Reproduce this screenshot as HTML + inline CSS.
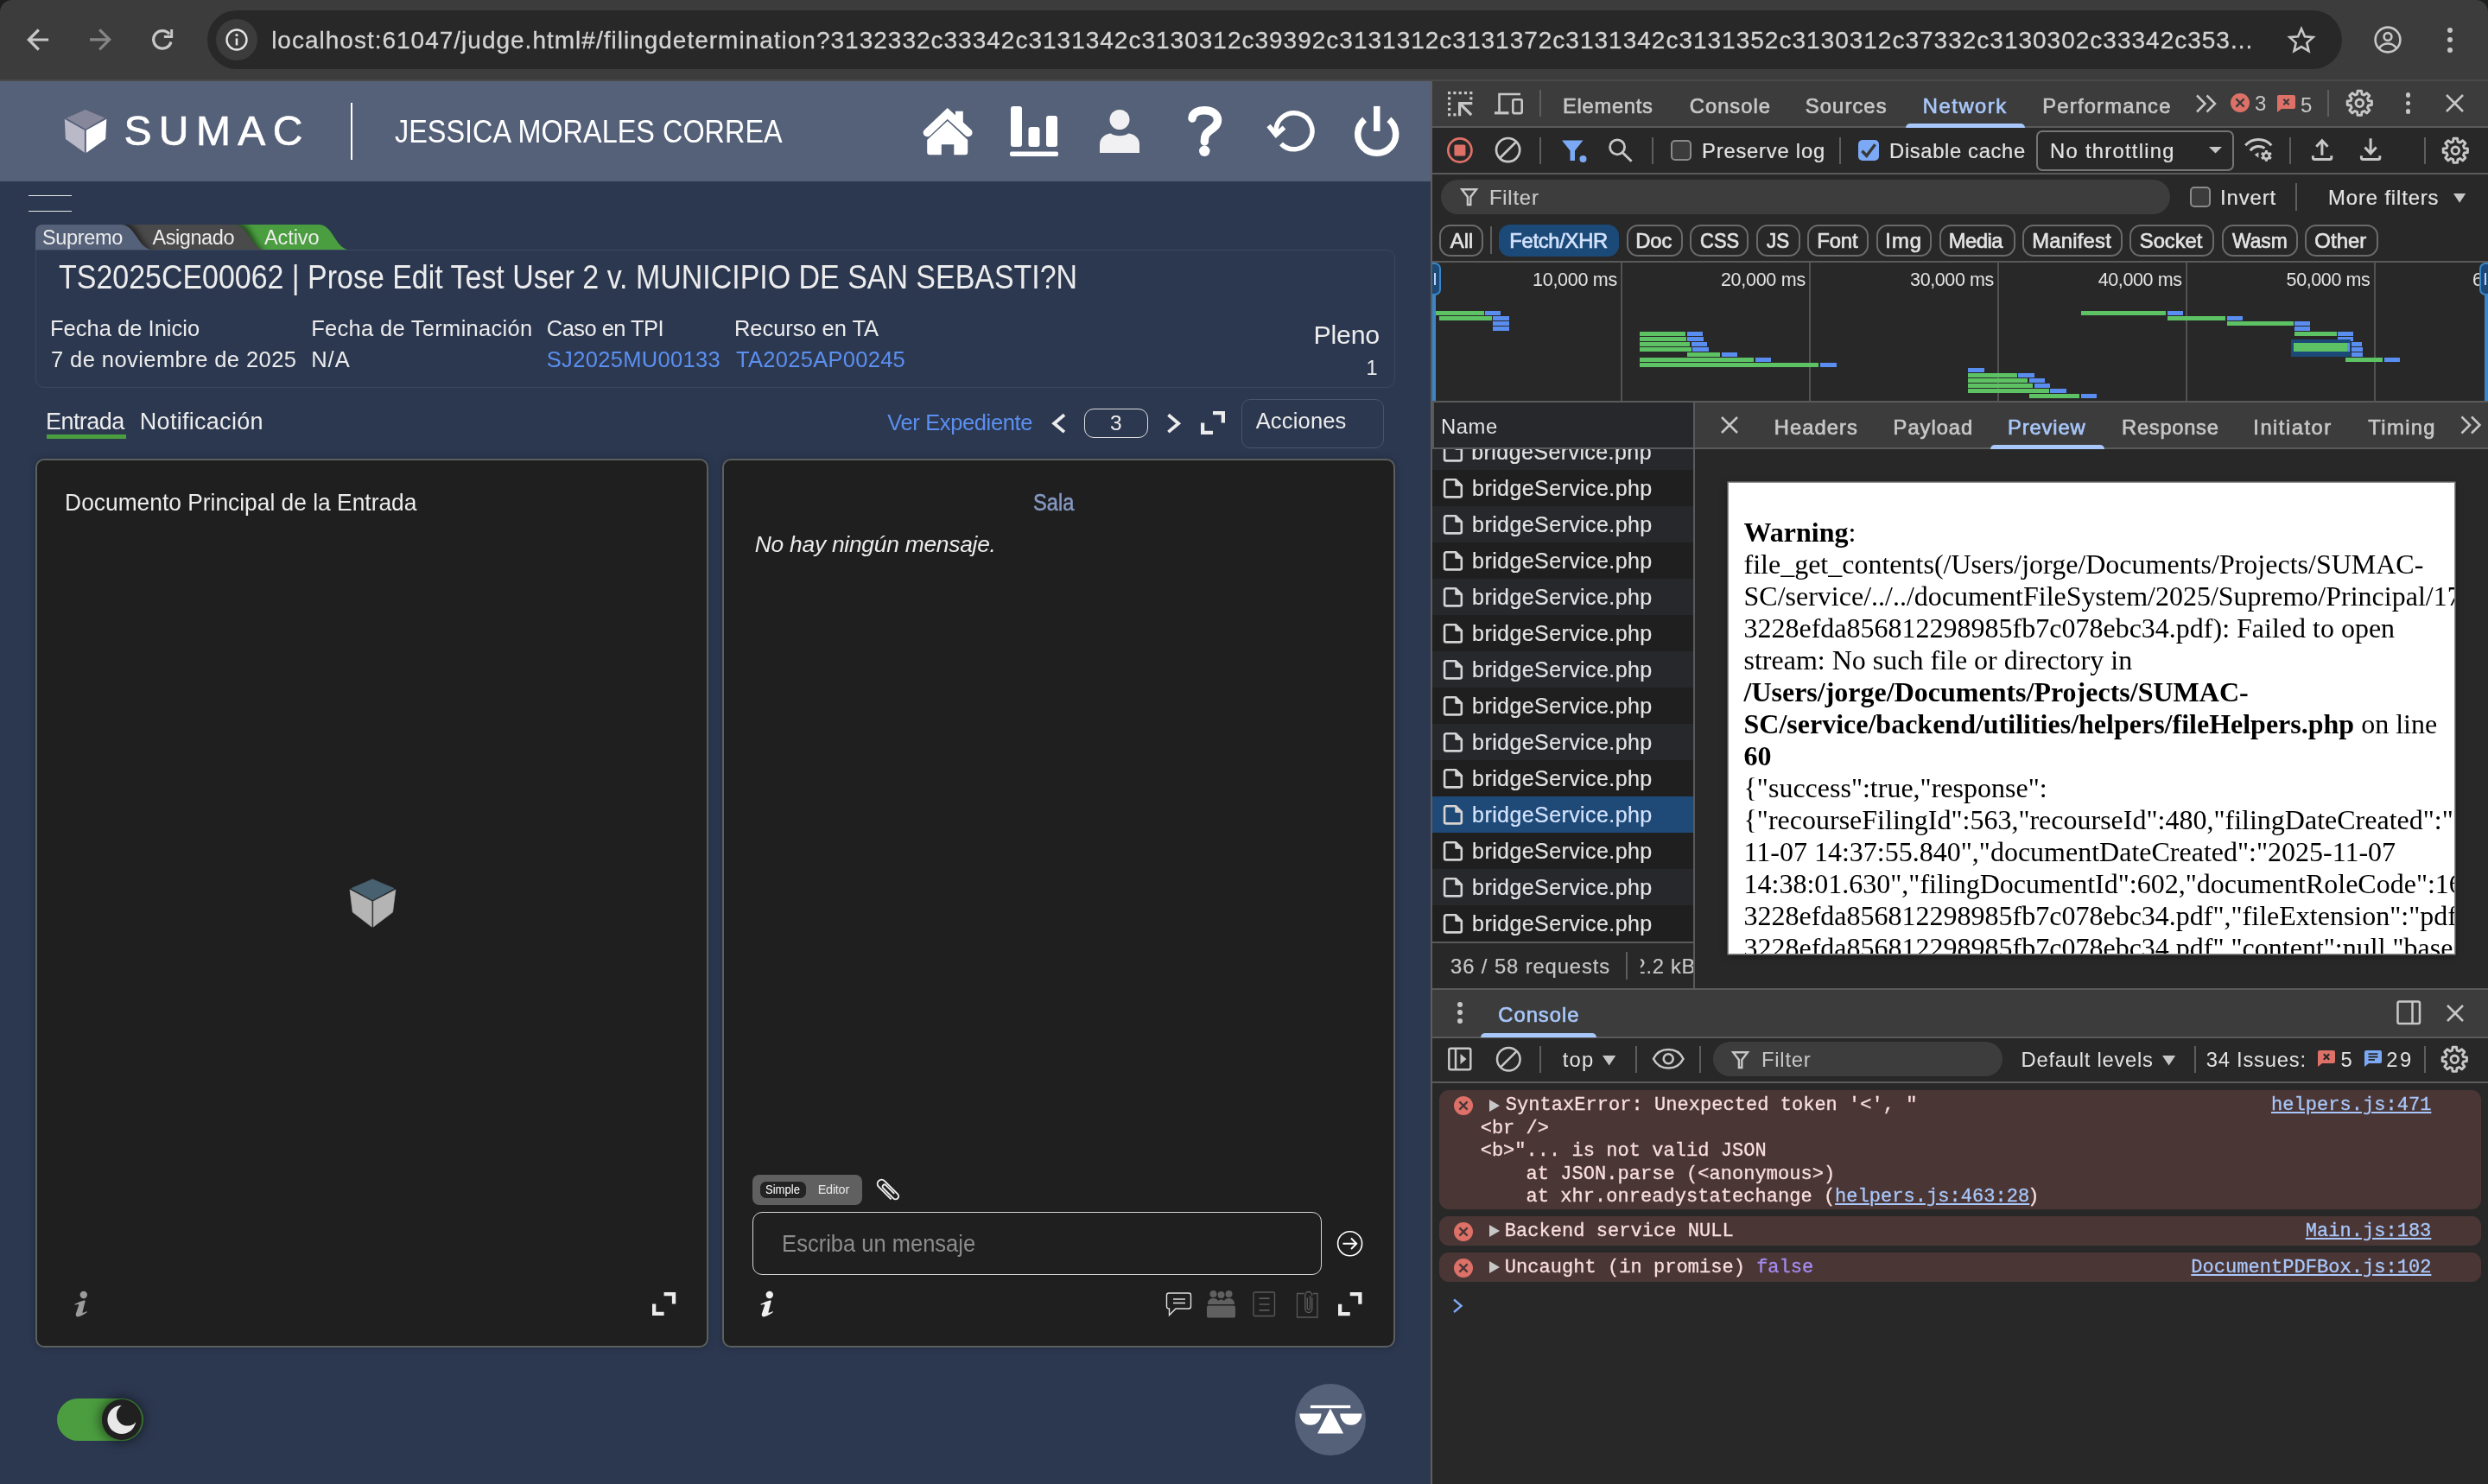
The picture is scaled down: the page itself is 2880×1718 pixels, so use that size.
<!DOCTYPE html>
<html><head><meta charset="utf-8"><title>page</title>
<style>
html,body{margin:0;padding:0;background:#282828;}
html{overflow:hidden;width:2880px;height:1718px;}
body{width:2880px;height:1718px;position:relative;overflow:hidden;will-change:transform;font-family:"Liberation Sans",sans-serif;}
.a{position:absolute;box-sizing:border-box;}
.t{position:absolute;white-space:pre;line-height:1;}
svg{position:absolute;overflow:visible;}
</style></head><body>
<div class="a" style="left:0px;top:0px;width:2880px;height:92px;background:#3c3c3c;"></div>
<div class="a" style="left:0px;top:92px;width:2880px;height:2px;background:#4a4a4a;"></div>
<svg style="left:0;top:0" width="24" height="24" viewBox="0 0 24 24"><path d="M0 0H14A14 14 0 0 0 0 14Z" fill="#1d1f1f"/></svg>
<svg style="left:2856px;top:0" width="24" height="24" viewBox="0 0 24 24"><path d="M24 0H10A14 14 0 0 1 24 14Z" fill="#1d1f1f"/></svg>
<div class="a" style="left:240px;top:12px;width:2471px;height:68px;background:#282828;border-radius:34px;"></div>
<div class="a" style="left:250px;top:22px;width:48px;height:48px;background:#3c3c3c;border-radius:24px;"></div>
<svg style="left:260px;top:32px" width="28" height="28" viewBox="0 0 28 28"><circle cx="14" cy="14" r="11.5" fill="none" stroke="#e3e3e3" stroke-width="2.4"/><rect x="12.7" y="12.4" width="2.6" height="8" fill="#e3e3e3"/><circle cx="14" cy="8.6" r="1.7" fill="#e3e3e3"/></svg>
<svg style="left:28px;top:30px" width="32" height="32" viewBox="28 30 32 32"><path d="M56.100 46H34M44.800 34.500L33.300 46L44.800 57.500" fill="none" stroke="#c7c7c7" stroke-width="3.200"/></svg>
<svg style="left:100px;top:30px" width="32" height="32" viewBox="100 30 32 32"><path d="M104 45.800H126.200M115.200 34.300L126.700 45.800L115.200 57.300" fill="none" stroke="#858585" stroke-width="3.200"/></svg>
<svg style="left:172px;top:30px" width="32" height="32" viewBox="172 30 32 32"><path d="M196.100 39.500A10.300 10.300 0 1 0 197.950 48.500" fill="none" stroke="#c7c7c7" stroke-width="3.200"/><path d="M198.700 34V42.500H189.900" fill="none" stroke="#c7c7c7" stroke-width="2.900"/></svg>
<div class="t" style='left:314.15px;top:32.70px;font-size:28px;color:#d4d4d4;letter-spacing:1.002px;-webkit-text-stroke:0.300px #d4d4d4;'>localhost:61047/judge.html#/filingdetermination?3132332c33342c3131342c3130312c39392c3131312c3131372c3131342c3131352c3130312c37332c3130302c33342c353...</div>
<svg style="left:2648px;top:30px" width="32" height="32" viewBox="0 0 32 32"><path d="M16 3.2l3.9 9 9.7.9-7.3 6.5 2.2 9.5L16 24.1l-8.5 5 2.2-9.5-7.3-6.5 9.7-.9z" fill="none" stroke="#c7c7c7" stroke-width="2.6" stroke-linejoin="miter"/></svg>
<svg style="left:2748px;top:30px" width="32" height="32" viewBox="0 0 32 32"><circle cx="16" cy="16" r="14.4" fill="none" stroke="#c7c7c7" stroke-width="2.6"/><circle cx="16" cy="12.5" r="4.4" fill="none" stroke="#c7c7c7" stroke-width="2.6"/><path d="M6.2 25.5c2.5-3.6 6-5 9.8-5s7.300 1.400 9.800 5" fill="none" stroke="#c7c7c7" stroke-width="2.6"/></svg>
<div class="a" style="left:2832.7px;top:31.700000000000003px;width:6px;height:6px;background:#c7c7c7;border-radius:3px;"></div>
<div class="a" style="left:2832.7px;top:43.3px;width:6px;height:6px;background:#c7c7c7;border-radius:3px;"></div>
<div class="a" style="left:2832.7px;top:54.9px;width:6px;height:6px;background:#c7c7c7;border-radius:3px;"></div>
<div class="a" style="left:0px;top:94px;width:1656px;height:1624px;background:#2c3850;"></div>
<div class="a" style="left:0px;top:94px;width:1656px;height:116px;background:#556179;"></div>
<div class="a" style="left:1656px;top:94px;width:2px;height:1624px;background:#5e5e5e;"></div>
<svg style="left:70px;top:122px" width="58" height="60" viewBox="70 122 58 60"><path d="M98.700 126.900L121.300 136.600L99 149.500L76.900 136.800Z" fill="#87879b"/><path d="M74.800 137.800L97.900 150.800V176.700L75.900 161Z" fill="#b9b9c7"/><path d="M123.300 137.800L99.800 150.800V177L122.200 161Z" fill="#ffffff"/></svg>
<div class="t" style='left:143.45px;top:127.67px;font-size:48px;color:#ffffff;letter-spacing:8.405px;-webkit-text-stroke:0.700px #fff;'>SUMAC</div>
<div class="a" style="left:406px;top:118.6px;width:2px;height:66px;background:#ffffff;"></div>
<div class="t" style='left:457.00px;top:135.03px;font-size:36px;color:#ffffff;transform:scaleX(0.9008);transform-origin:0.00px 0;'>JESSICA MORALES CORREA</div>
<svg style="left:1060px;top:118px" width="72" height="66" viewBox="1060 118 72 66"><path d="M1073.400 153.600L1096.800 131.400L1120.800 153.600" stroke="#ffffff" stroke-width="9.500" stroke-linecap="round" stroke-linejoin="miter" fill="none"/><path d="M1106 128.700H1114.800V146L1106 137.500Z" fill="#ffffff"/><path d="M1096.800 139.900L1073.200 162V176.200a3 3 0 0 0 3 3H1089.800V167.300H1104.300V179.200H1117.200a3 3 0 0 0 3-3V162Z" fill="#ffffff"/></svg>
<svg style="left:1169px;top:123px" width="56" height="58" viewBox="0 0 56 58"><rect x="1" y="0" width="13" height="47" rx="3" fill="#ffffff"/><rect x="21.500" y="24" width="13" height="23" rx="3" fill="#ffffff"/><rect x="42" y="11" width="13" height="36" rx="3" fill="#ffffff"/><rect x="0" y="52.500" width="56" height="5.500" rx="2" fill="#ffffff"/></svg>
<svg style="left:1273px;top:127px" width="46" height="50" viewBox="0 0 46 50"><circle cx="23" cy="11.500" r="11.500" fill="#f1f1f3"/><path d="M0 50V40C0 32 7 28 13 27.500C17 31 29 31 33 27.500C39 28 46 32 46 40V50Z" fill="#f1f1f3"/></svg>
<svg style="left:1370px;top:118px" width="50" height="68" viewBox="1370 118 50 68"><path d="M1380 137C1380.500 131 1386.500 127.700 1394.500 127.700C1403 127.700 1409.500 132 1409.500 139C1409.500 145 1405 148 1400.500 151C1396 154.500 1394.300 157 1394.300 164" fill="none" stroke="#ffffff" stroke-width="9.500" stroke-linecap="round"/><circle cx="1394.300" cy="174.800" r="6.200" fill="#ffffff"/></svg>
<svg style="left:1460px;top:120px" width="70" height="62" viewBox="1460 120 70 62"><path d="M1477 152.500A21 21 0 1 1 1483 166.500" fill="none" stroke="#ffffff" stroke-width="5.500" stroke-linecap="butt"/><path d="M1468.500 145.500L1477 156L1486.500 147.500" fill="none" stroke="#ffffff" stroke-width="5.500" stroke-linecap="butt" stroke-linejoin="miter"/></svg>
<svg style="left:1562px;top:118px" width="64" height="68" viewBox="1562 118 64 68"><path d="M1579.6 138.4A22 22 0 1 0 1607.8 138.4" fill="none" stroke="#ffffff" stroke-width="7.500"/><rect x="1590" y="122.900" width="7.500" height="29" fill="#ffffff"/></svg>
<div class="a" style="left:33px;top:225.5px;width:50px;height:1.2px;background:#e8e8e8;"></div>
<div class="a" style="left:33px;top:244px;width:50px;height:1.2px;background:#e8e8e8;"></div>
<svg style="left:0;top:260px" width="420" height="30" viewBox="0 260 420 30"><defs><filter id="bl" x="-20%" y="-50%" width="140%" height="200%"><feGaussianBlur stdDeviation="3.500"/></filter><clipPath id="cg"><path d="M250 289.500V260H369C386 260 388 289.500 406 289.500Z"/></clipPath><clipPath id="cy"><path d="M120 289.500V260H271C288 260 290 289.500 308 289.500Z"/></clipPath></defs><path d="M250 289.500V260H369C386 260 388 289.500 406 289.500Z" fill="#4a9e40"/><g clip-path="url(#cg)"><path d="M120 292V257H275C292 257 294 292 312 292Z" fill="#000" opacity=".55" filter="url(#bl)"/></g><path d="M120 289.500V260H271C288 260 290 289.500 308 289.500Z" fill="#4a4a4a"/><g clip-path="url(#cy)"><path d="M30 292V257H144C161 257 164 292 182 292Z" fill="#000" opacity=".55" filter="url(#bl)"/></g><path d="M41 289.500V269Q41 260 50 260H140C157 260 160 289.500 178 289.500Z" fill="#556179"/></svg>
<div class="t" style='left:48.90px;top:263.51px;font-size:23.5px;color:#ececec;letter-spacing:-0.331px;'>Supremo</div>
<div class="t" style='left:176.50px;top:263.51px;font-size:23.5px;color:#ececec;letter-spacing:-0.432px;'>Asignado</div>
<div class="t" style='left:305.90px;top:263.51px;font-size:23.5px;color:#ececec;letter-spacing:-0.065px;'>Activo</div>
<div class="a" style="left:41px;top:288.6px;width:1573.5px;height:160px;border:1.500px solid #3c4860;border-radius:0 10px 10px 10px;"></div>
<div class="t" style='left:68.00px;top:301.53px;font-size:38px;color:#ececec;transform:scaleX(0.8933);transform-origin:0.00px 0;'>TS2025CE00062 | Prose Edit Test User 2 v. MUNICIPIO DE SAN SEBASTI?N</div>
<div class="t" style='left:58.00px;top:367.71px;font-size:25.5px;color:#ececec;letter-spacing:0.018px;'>Fecha de Inicio</div>
<div class="t" style='left:59.00px;top:404.01px;font-size:25.5px;color:#ececec;letter-spacing:0.426px;'>7 de noviembre de 2025</div>
<div class="t" style='left:360.20px;top:367.71px;font-size:25.5px;color:#ececec;letter-spacing:0.295px;'>Fecha de Terminación</div>
<div class="t" style='left:360.20px;top:404.01px;font-size:25.5px;color:#ececec;letter-spacing:1.000px;'>N/A</div>
<div class="t" style='left:632.80px;top:367.71px;font-size:25.5px;color:#ececec;letter-spacing:-0.555px;'>Caso en TPI</div>
<div class="t" style='left:632.80px;top:404.01px;font-size:25.5px;color:#5b8ff0;letter-spacing:0.311px;'>SJ2025MU00133</div>
<div class="t" style='left:850.00px;top:367.71px;font-size:25.5px;color:#ececec;letter-spacing:-0.056px;'>Recurso en TA</div>
<div class="t" style='left:852.00px;top:404.01px;font-size:25.5px;color:#5b8ff0;letter-spacing:0.286px;'>TA2025AP00245</div>
<div class="t" style='left:1520.50px;top:372.75px;font-size:30.3px;color:#ececec;letter-spacing:-0.210px;'>Pleno</div>
<div class="t" style='left:1581.40px;top:415.11px;font-size:23.5px;color:#ececec;'>1</div>
<div class="t" style='left:53.00px;top:474.64px;font-size:27px;color:#ececec;letter-spacing:-0.558px;'>Entrada</div>
<div class="a" style="left:54px;top:503px;width:92px;height:5px;background:#4a9e40;"></div>
<div class="t" style='left:161.80px;top:474.64px;font-size:27px;color:#ececec;letter-spacing:0.287px;'>Notificación</div>
<div class="t" style='left:1027.30px;top:476.81px;font-size:25.5px;color:#5b8ff0;letter-spacing:-0.375px;'>Ver Expediente</div>
<svg style="left:1214px;top:476px" width="24" height="30" viewBox="1214 476 24 30"><path d="M1232 480.300L1220.200 490.200L1232 500.100" fill="none" stroke="#ececec" stroke-width="3.800"/></svg>
<div class="a" style="left:1254.7px;top:473.3px;width:73.9px;height:33.7px;border:1.500px solid #dcdcdc;border-radius:11px;"></div>
<div class="t" style='left:1285.00px;top:478.36px;font-size:24.5px;color:#ececec;'>3</div>
<svg style="left:1346px;top:476px" width="24" height="30" viewBox="1346 476 24 30"><path d="M1352.400 480.300L1364.200 490.200L1352.400 500.100" fill="none" stroke="#ececec" stroke-width="3.800"/></svg>
<svg style="left:1389.7px;top:475.9px" width="28" height="27" viewBox="0 0 28 27"><path d="M14.0 2.15H25.85V13.5" fill="none" stroke="#ececec" stroke-width="4.3"/><path d="M2.15 13.5V24.85H14.0" fill="none" stroke="#ececec" stroke-width="4.3"/></svg>
<div class="a" style="left:1437px;top:462px;width:164.6px;height:57px;border:1.500px solid #47546c;border-radius:10px;"></div>
<div class="t" style='left:1453.70px;top:475.01px;font-size:25.5px;color:#ececec;letter-spacing:0.169px;'>Acciones</div>
<div class="a" style="left:41px;top:531px;width:779px;height:1029px;background:#1f1f1f;border:2px solid #5a5f5f;border-radius:10px;box-shadow:0 0 8px rgba(0,0,0,.25);"></div>
<div class="a" style="left:836px;top:531px;width:778.6px;height:1029px;background:#1f1f1f;border:2px solid #5a5f5f;border-radius:10px;box-shadow:0 0 8px rgba(0,0,0,.25);"></div>
<div class="t" style='left:75.00px;top:568.30px;font-size:28px;color:#ececec;transform:scaleX(0.9413);transform-origin:2.00px 0;'>Documento Principal de la Entrada</div>
<div class="t" style='left:1196.15px;top:568.74px;font-size:27px;color:#8699c4;transform:scaleX(0.8749);transform-origin:0.75px 0;-webkit-text-stroke:0.500px #8699c4;'>Sala</div>
<div class="t" style='left:873.80px;top:616.55px;font-size:26.4px;color:#ececec;font-style:italic;letter-spacing:-0.261px;'>No hay ningún mensaje.</div>
<svg style="left:400px;top:1012px" width="64" height="66" viewBox="400 1012 64 66"><path d="M431.200 1017.900L456.100 1028.500L431.200 1042.100L406.700 1028.500Z" fill="#486170" stroke="#486170" stroke-width="0.800" stroke-linejoin="round"/><path d="M405 1030L430.300 1043.400V1073.100L408.200 1056.100Z" fill="#b4b4b4" stroke="#b4b4b4" stroke-width="0.600" stroke-linejoin="round"/><path d="M457.900 1030L432.200 1043.400V1073.100L454.600 1056.100Z" fill="#b4b4b4" stroke="#b4b4b4" stroke-width="0.600" stroke-linejoin="round"/></svg>
<div class="a" style="left:871.2px;top:1360px;width:126.4px;height:34.7px;background:#606060;border-radius:8px;"></div>
<div class="a" style="left:880px;top:1368.1px;width:52.8px;height:19px;background:#232323;border-radius:6.500px;"></div>
<div class="t" style='left:886.00px;top:1370.03px;font-size:14.5px;color:#ffffff;transform:scaleX(0.9016);transform-origin:0.00px 0;'>Simple</div>
<div class="t" style='left:946.70px;top:1370.03px;font-size:14.5px;color:#e6e6e6;letter-spacing:-0.270px;'>Editor</div>
<svg style="left:1008px;top:1358px" width="40" height="40" viewBox="1008 1358 40 40"><g transform="translate(1027.700 1377.700) rotate(-45)" fill="none" stroke-linecap="round"><path d="M-4.800 9.500V-10.200A4.800 4.800 0 0 1 4.800 -10.200V11.400A3.500 3.500 0 0 1 -2.200 11.400V-5.500A2.300 2.300 0 0 1 2.400 -5.500V7.500" stroke="#f0f0f0" stroke-width="1.900"/></g></svg>
<div class="a" style="left:871.2px;top:1403.3px;width:658.5px;height:72.4px;border:1.500px solid #d6d6d6;border-radius:11px;"></div>
<div class="t" style='left:904.60px;top:1427.44px;font-size:27px;color:#8c8c8c;transform:scaleX(0.9449);transform-origin:2.00px 0;'>Escriba un mensaje</div>
<svg style="left:1546px;top:1423px" width="34" height="34" viewBox="0 0 34 34"><circle cx="16.600" cy="16.700" r="14" fill="none" stroke="#fff" stroke-width="1.600"/><path d="M8.500 16.700H24M18 10.500l6.200 6.200L18 23" fill="none" stroke="#fff" stroke-width="2"/></svg>
<svg style="left:80px;top:1490px" width="28" height="40" viewBox="80 1490 28 40"><circle cx="96.800" cy="1499" r="4.200" fill="#9b9b9b"/><path d="M98 1505.300C95 1506 90 1508 86.300 1509.800L86.900 1510.700C89 1509.900 91.200 1509.600 91.300 1510.800L87.800 1521C87.300 1523.600 88.800 1524.700 91 1524.300C94 1523.600 98 1521.200 100.900 1519L100.300 1518.100C98 1519.500 95.600 1520.500 95.400 1519.300L98.700 1506.300Z" fill="#9b9b9b"/></svg>
<svg style="left:874px;top:1490px" width="28" height="40" viewBox="80 1490 28 40"><circle cx="96.800" cy="1499" r="4.200" fill="#f0f0f0"/><path d="M98 1505.300C95 1506 90 1508 86.300 1509.800L86.900 1510.700C89 1509.900 91.200 1509.600 91.300 1510.800L87.800 1521C87.300 1523.600 88.800 1524.700 91 1524.300C94 1523.600 98 1521.200 100.900 1519L100.300 1518.100C98 1519.500 95.600 1520.500 95.400 1519.300L98.700 1506.300Z" fill="#f0f0f0"/></svg>
<svg style="left:755px;top:1496px" width="27.2" height="27.1" viewBox="0 0 27.2 27.1"><path d="M13.6 2.15H25.05V13.55" fill="none" stroke="#ececec" stroke-width="4.3"/><path d="M2.15 13.55V24.950000000000003H13.6" fill="none" stroke="#ececec" stroke-width="4.3"/></svg>
<svg style="left:1549px;top:1496px" width="27.5" height="27.3" viewBox="0 0 27.5 27.3"><path d="M13.75 2.15H25.35V13.65" fill="none" stroke="#ececec" stroke-width="4.3"/><path d="M2.15 13.65V25.150000000000002H13.75" fill="none" stroke="#ececec" stroke-width="4.3"/></svg>
<svg style="left:1349px;top:1495px" width="32" height="30" viewBox="0 0 32 30"><path d="M4 2H27a2.500 2.500 0 0 1 2.500 2.500V17.500A2.500 2.500 0 0 1 27 20H12L4.500 27.500V20H4A2.500 2.500 0 0 1 1.500 17.500V4.500A2.500 2.500 0 0 1 4 2Z" fill="none" stroke="#e0e0e0" stroke-width="1.400"/><path d="M9 9H23M9 13.500H23" stroke="#e0e0e0" stroke-width="1.500"/></svg>
<svg style="left:1397px;top:1493px" width="33" height="33" viewBox="0 0 33 33"><g fill="#606060"><circle cx="7.500" cy="5" r="4"/><circle cx="16.500" cy="6" r="4"/><circle cx="25.500" cy="5" r="4"/><path d="M1 17c0-5 3-7 6.500-7s5 1.500 5.500 3c1-1 2-1.500 3.500-1.500s2.500.500 3.500 1.500c.500-1.500 2-3 5.500-3s6.500 2 6.500 7z"/><rect x="0" y="18.500" width="33" height="14" rx="2"/></g></svg>
<svg style="left:1450px;top:1495px" width="27" height="30" viewBox="0 0 27 30"><rect x="1" y="1" width="24.500" height="27.500" rx="1.500" fill="none" stroke="#5a5a5a" stroke-width="1.300"/><path d="M7.500 8.200H19.500M7.500 15H19.500M7.500 21.800H19.500" stroke="#5a5a5a" stroke-width="1.700"/></svg>
<svg style="left:1500px;top:1493px" width="27" height="33" viewBox="0 0 27 33"><path d="M9.500 4.500H1.500V32H25V4.500H20" fill="none" stroke="#5a5a5a" stroke-width="1.300"/><path d="M10.800 6.500V22.500a4 4 0 0 0 8 0V9.500M10.800 6.500a4 4 0 0 1 8 0" fill="none" stroke="#5e5e5e" stroke-width="1.300" stroke-linecap="round"/><path d="M13.300 10V21.500a1.600 1.600 0 0 0 3.200 0V7.500" fill="none" stroke="#5e5e5e" stroke-width="1.300" stroke-linecap="round"/></svg>
<div class="a" style="left:65.9px;top:1618.8px;width:100.4px;height:49.2px;background:#4b9d3f;border-radius:25px;"></div>
<div class="a" style="left:117.7px;top:1620.2px;width:46.8px;height:46.8px;background:#202020;border-radius:24px;box-shadow:0 0 14px 2px rgba(0,0,0,.55);"></div>
<svg style="left:117px;top:1620px" width="48" height="48" viewBox="117 1620 48 48"><defs><clipPath id="kn"><circle cx="141.100" cy="1643.600" r="23.400"/></clipPath></defs><g clip-path="url(#kn)"><circle cx="140.900" cy="1643.500" r="16.500" fill="#e8e8e8"/><circle cx="147.600" cy="1637.900" r="12.700" fill="#202020"/></g></svg>
<div class="a" style="left:1498.7px;top:1602px;width:82.8px;height:82.8px;background:#556179;border-radius:42px;"></div>
<svg style="left:1498px;top:1602px" width="84" height="84" viewBox="1498 1602 84 84"><g fill="#fff"><rect x="1516.900" y="1626.900" width="46.300" height="3.300"/><path d="M1539.900 1630.400L1555.100 1659.600H1525.100Z"/><path d="M1504.300 1636.600H1529.500A12.600 13.200 0 0 1 1504.300 1636.600Z"/><path d="M1551.200 1636.600H1576.400A12.600 13.200 0 0 1 1551.200 1636.600Z"/></g></svg>
<div class="a" style="left:1658px;top:94px;width:1222px;height:1624px;background:#282828;"></div>
<div class="a" style="left:1658px;top:94px;width:1222px;height:52px;background:#3c3c3c;"></div>
<div class="a" style="left:1658px;top:146px;width:1222px;height:2px;background:#5a5a5a;"></div>
<svg style="left:1674px;top:104px" width="34" height="34" viewBox="1674 104 34 34"><rect x="1676.0" y="106.0" width="3.200" height="3.200" fill="#c7c7c7"/><rect x="1682.3" y="106.0" width="3.200" height="3.200" fill="#c7c7c7"/><rect x="1688.6" y="106.0" width="3.200" height="3.200" fill="#c7c7c7"/><rect x="1694.9" y="106.0" width="3.200" height="3.200" fill="#c7c7c7"/><rect x="1701.2" y="106.0" width="3.200" height="3.200" fill="#c7c7c7"/><rect x="1676.0" y="112.3" width="3.200" height="3.200" fill="#c7c7c7"/><rect x="1676.0" y="118.6" width="3.200" height="3.200" fill="#c7c7c7"/><rect x="1676.0" y="124.9" width="3.200" height="3.200" fill="#c7c7c7"/><rect x="1676.0" y="131.2" width="3.200" height="3.200" fill="#c7c7c7"/><rect x="1701.2" y="112.3" width="3.200" height="3.200" fill="#c7c7c7"/><rect x="1682.3" y="131.2" width="3.200" height="3.200" fill="#c7c7c7"/><path d="M1688 118H1704.300V121.200H1691.200V134.200H1688Z" fill="#c7c7c7"/><path d="M1690 120L1703.200 133.200" stroke="#c7c7c7" stroke-width="3.200"/></svg>
<svg style="left:1728px;top:105px" width="38" height="30" viewBox="1728 105 38 30"><path d="M1760 109H1735.500V129.500" fill="none" stroke="#c7c7c7" stroke-width="2.600"/><path d="M1730 130.800H1746.500" stroke="#c7c7c7" stroke-width="3.200"/><rect x="1751.300" y="115.300" width="10.400" height="15.800" rx="1.500" fill="none" stroke="#c7c7c7" stroke-width="2.600"/></svg>
<div class="a" style="left:1782px;top:104px;width:2px;height:31px;background:#5e5e5e"></div>
<div class="t" style='left:1809.03px;top:110.95px;font-size:23.8px;color:#c7c7c7;letter-spacing:0.679px;-webkit-text-stroke:0.650px currentColor;'>Elements</div>
<div class="t" style='left:1955.83px;top:110.95px;font-size:23.8px;color:#c7c7c7;letter-spacing:0.963px;-webkit-text-stroke:0.650px currentColor;'>Console</div>
<div class="t" style='left:2089.82px;top:110.95px;font-size:23.8px;color:#c7c7c7;letter-spacing:1.075px;-webkit-text-stroke:0.650px currentColor;'>Sources</div>
<div class="t" style='left:2225.82px;top:110.95px;font-size:23.8px;color:#a8c7fa;letter-spacing:1.512px;-webkit-text-stroke:0.650px currentColor;'>Network</div>
<div class="a" style="left:2206px;top:143px;width:138px;height:5px;background:#a8c7fa;border-radius:5px 5px 0 0;"></div>
<div class="t" style='left:2364.32px;top:110.95px;font-size:23.8px;color:#c7c7c7;letter-spacing:1.186px;-webkit-text-stroke:0.650px currentColor;'>Performance</div>
<svg style="left:2540px;top:108px" width="28" height="24" viewBox="2540 108 28 24"><path d="M2543 110.500L2552.500 120L2543 129.500M2554.500 110.500L2564 120L2554.500 129.500" fill="none" stroke="#c7c7c7" stroke-width="2.500"/></svg>
<svg style="left:2580.6px;top:107.2px" width="24" height="24" viewBox="2580.6 107.2 24 24"><circle cx="2592.6" cy="119.2" r="11" fill="#dd7168"/><path d="M2587.98 114.58L2597.22 123.82000000000001M2597.22 114.58L2587.98 123.82000000000001" stroke="#3c3c3c" stroke-width="2.400" fill="none"/></svg>
<div class="t" style='left:2610.00px;top:107.68px;font-size:24px;color:#c7c7c7;'>3</div>
<svg style="left:2635px;top:109px" width="23" height="22" viewBox="2635 109 23 22"><path d="M2638 110H2655a2 2 0 0 1 2 2V124a2 2 0 0 1-2 2H2641L2636 130V112a2 2 0 0 1 2-2Z" fill="#dd7168"/><path d="M2643.3 114.8L2649.7 121.2M2649.7 114.8L2643.3 121.2" stroke="#3c3c3c" stroke-width="2.200" fill="none"/></svg>
<div class="t" style='left:2663.00px;top:109.68px;font-size:24px;color:#c7c7c7;'>5</div>
<div class="a" style="left:2693.8px;top:104px;width:2px;height:31px;background:#5e5e5e"></div>
<svg style="left:2714.2px;top:102.2px" width="35" height="35" viewBox="2714.2 102.2 35 35"><path d="M2728.78 109.25L2729.26 105.38L2733.74 105.38L2734.22 109.25L2736.82 110.33L2739.91 107.93L2743.07 111.09L2740.67 114.18L2741.75 116.78L2745.62 117.26L2745.62 121.74L2741.75 122.22L2740.67 124.82L2743.07 127.91L2739.91 131.07L2736.82 128.67L2734.22 129.75L2733.74 133.62L2729.26 133.62L2728.78 129.75L2726.18 128.67L2723.09 131.07L2719.93 127.91L2722.33 124.82L2721.25 122.22L2717.38 121.74L2717.38 117.26L2721.25 116.78L2722.33 114.18L2719.93 111.09L2723.09 107.93L2726.18 110.33Z" fill="none" stroke="#c7c7c7" stroke-width="2.9" stroke-linejoin="round"/><circle cx="2731.5" cy="119.5" r="4.3" fill="none" stroke="#c7c7c7" stroke-width="2.9"/></svg>
<div class="a" style="left:2784.5px;top:106.89999999999999px;width:5.8px;height:5.8px;border-radius:2.9px;background:#c7c7c7"></div><div class="a" style="left:2784.5px;top:116.6px;width:5.8px;height:5.8px;border-radius:2.9px;background:#c7c7c7"></div><div class="a" style="left:2784.5px;top:126.29999999999998px;width:5.8px;height:5.8px;border-radius:2.9px;background:#c7c7c7"></div>
<svg style="left:2830.3px;top:108.0px" width="23.0" height="23.0" viewBox="2830.3 108.0 23.0 23.0"><path d="M2832.3 110.0L2851.3 129.0M2851.3 110.0L2832.3 129.0" stroke="#c7c7c7" stroke-width="2.5" fill="none"/></svg>
<div class="a" style="left:1658px;top:200px;width:1222px;height:2px;background:#5a5a5a;"></div>
<svg style="left:1672px;top:157px" width="36" height="36" viewBox="1672 157 36 36"><circle cx="1689.900" cy="174" r="13.600" fill="none" stroke="#dd7168" stroke-width="2.700"/><rect x="1683.400" y="167.500" width="13" height="13" rx="1.500" fill="#dd7168"/></svg>
<svg style="left:1730.3000000000002px;top:158.4px" width="31.2" height="31.2" viewBox="1730.3000000000002 158.4 31.2 31.2"><circle cx="1745.9" cy="174" r="13.6" fill="none" stroke="#c7c7c7" stroke-width="2.7"/><path d="M1736.2834400000002 183.61656L1755.51656 164.38344" stroke="#c7c7c7" stroke-width="2.7"/></svg>
<div class="a" style="left:1782px;top:158.5px;width:2px;height:31.5px;background:#5e5e5e"></div>
<svg style="left:1805px;top:160px" width="36" height="30" viewBox="1805 160 36 30"><path d="M1808 162.500H1832.500L1823 174.500V186H1817.500V174.500Z" fill="#7ca9f5"/><circle cx="1832.500" cy="184" r="4" fill="#7ca9f5"/></svg>
<svg style="left:1860px;top:160px" width="34" height="32" viewBox="1860 160 34 32"><circle cx="1872.100" cy="170.300" r="8.500" fill="none" stroke="#c7c7c7" stroke-width="2.800"/><path d="M1878.300 176.700L1888.600 186.800" stroke="#c7c7c7" stroke-width="3"/></svg>
<div class="a" style="left:1912px;top:158.5px;width:2px;height:31.5px;background:#5e5e5e"></div>
<div class="a" style="left:1934.2px;top:162px;width:23.8px;height:23.8px;background:#3c3c3c;border:2.200px solid #8a8a8a;border-radius:5px;"></div>
<div class="t" style='left:1970.10px;top:163.25px;font-size:23.8px;color:#e3e3e3;letter-spacing:0.768px;-webkit-text-stroke:0.200px currentColor;'>Preserve log</div>
<div class="a" style="left:2129px;top:158.5px;width:2px;height:31.5px;background:#5e5e5e"></div>
<div class="a" style="left:2150.9px;top:162px;width:24.2px;height:24px;background:#7ca9f5;border-radius:5px;"></div>
<svg style="left:2150px;top:162px" width="25" height="24" viewBox="2150 162 25 24"><path d="M2155.400 174.800L2160.700 180.300L2170.600 167.200" fill="none" stroke="#383838" stroke-width="3.400"/></svg>
<div class="t" style='left:2187.10px;top:163.25px;font-size:23.8px;color:#e3e3e3;letter-spacing:0.630px;-webkit-text-stroke:0.200px currentColor;'>Disable cache</div>
<div class="a" style="left:2357px;top:151px;width:228.5px;height:46.5px;border:2px solid #757575;border-radius:7px;"></div>
<div class="t" style='left:2373.10px;top:163.25px;font-size:23.8px;color:#e3e3e3;letter-spacing:1.261px;-webkit-text-stroke:0.200px currentColor;'>No throttling</div>
<svg style="left:2555.5px;top:169px" width="17.0" height="9.5" viewBox="2555.5 169 17.0 9.5"><path d="M2556.5 170H2571.5L2564.0 177.5Z" fill="#c7c7c7"/></svg>
<svg style="left:2594px;top:156px" width="40" height="34" viewBox="2594 156 40 34"><path d="M2599.200 168.300A20 20 0 0 1 2629.300 168.300" fill="none" stroke="#c7c7c7" stroke-width="3"/><path d="M2604.800 174.300A12.500 12.500 0 0 1 2621.500 171.400" fill="none" stroke="#c7c7c7" stroke-width="3"/><path d="M2609.800 179L2614.400 176.300V182.800Z" fill="#c7c7c7"/><path d="M2621.68 175.92L2621.96 173.96L2624.84 173.96L2625.12 175.92L2626.42 176.67L2628.26 175.93L2629.70 178.43L2628.14 179.65L2628.14 181.15L2629.70 182.37L2628.26 184.87L2626.42 184.13L2625.12 184.88L2624.84 186.84L2621.96 186.84L2621.68 184.88L2620.38 184.13L2618.54 184.87L2617.10 182.37L2618.66 181.15L2618.66 179.65L2617.10 178.43L2618.54 175.93L2620.38 176.67Z" fill="#c7c7c7" fill-rule="evenodd"/><circle cx="2623.400" cy="180.400" r="2.100" fill="#282828"/></svg>
<div class="a" style="left:2650px;top:158.5px;width:2px;height:31.5px;background:#5e5e5e"></div>
<svg style="left:2672px;top:156px" width="32" height="34" viewBox="2672 156 32 34"><path d="M2687.900 179.800V162M2681.300 169.800L2687.900 162.600L2694.500 169.800" fill="none" stroke="#c7c7c7" stroke-width="3"/><path d="M2677.400 180.200V182.400a2 2 0 0 0 2 2H2696.800a2 2 0 0 0 2-2V180.200" fill="none" stroke="#c7c7c7" stroke-width="3"/></svg>
<svg style="left:2728px;top:156px" width="32" height="34" viewBox="2728 156 32 34"><path d="M2744.100 160.300V177.500M2737.500 170.600L2744.100 177.800L2750.700 170.600" fill="none" stroke="#c7c7c7" stroke-width="3"/><path d="M2733.400 180.200V182.400a2 2 0 0 0 2 2H2752.800a2 2 0 0 0 2-2V180.200" fill="none" stroke="#c7c7c7" stroke-width="3"/></svg>
<div class="a" style="left:2806px;top:158.5px;width:2px;height:31.5px;background:#5e5e5e"></div>
<svg style="left:2824.5px;top:156.9px" width="35" height="35" viewBox="2824.5 156.9 35 35"><path d="M2839.08 163.95L2839.56 160.08L2844.04 160.08L2844.52 163.95L2847.12 165.03L2850.21 162.63L2853.37 165.79L2850.97 168.88L2852.05 171.48L2855.92 171.96L2855.92 176.44L2852.05 176.92L2850.97 179.52L2853.37 182.61L2850.21 185.77L2847.12 183.37L2844.52 184.45L2844.04 188.32L2839.56 188.32L2839.08 184.45L2836.48 183.37L2833.39 185.77L2830.23 182.61L2832.63 179.52L2831.55 176.92L2827.68 176.44L2827.68 171.96L2831.55 171.48L2832.63 168.88L2830.23 165.79L2833.39 162.63L2836.48 165.03Z" fill="none" stroke="#c7c7c7" stroke-width="2.9" stroke-linejoin="round"/><circle cx="2841.8" cy="174.2" r="4.3" fill="none" stroke="#c7c7c7" stroke-width="2.9"/></svg>
<div class="a" style="left:1668px;top:208px;width:843.6px;height:40px;background:#3d3d3d;border-radius:20px;"></div>
<svg style="left:1689.6px;top:217px" width="22" height="23" viewBox="1689.6 217 22 23"><path d="M1691.8 219.2H1708.6L1701.8999999999999 228V237H1698.5V228Z" fill="none" stroke="#c7c7c7" stroke-width="2.400" stroke-linejoin="miter"/></svg>
<div class="t" style='left:1723.90px;top:217.37px;font-size:23.9px;color:#c7c7c7;letter-spacing:0.773px;-webkit-text-stroke:0.200px currentColor;'>Filter</div>
<div class="a" style="left:2535.2px;top:216px;width:23.8px;height:23.8px;background:#3c3c3c;border:2.200px solid #8a8a8a;border-radius:5px;"></div>
<div class="t" style='left:2570.10px;top:217.37px;font-size:23.9px;color:#e3e3e3;letter-spacing:0.858px;-webkit-text-stroke:0.200px currentColor;'>Invert</div>
<div class="a" style="left:2657px;top:212px;width:2px;height:32px;background:#5e5e5e"></div>
<div class="t" style='left:2695.10px;top:217.37px;font-size:23.9px;color:#e3e3e3;letter-spacing:0.845px;-webkit-text-stroke:0.200px currentColor;'>More filters</div>
<svg style="left:2838.8px;top:223.1px" width="16.199999999999818" height="12.800000000000011" viewBox="2838.8 223.1 16.199999999999818 12.800000000000011"><path d="M2839.8 224.1H2854L2846.9 234.9Z" fill="#c7c7c7"/></svg>
<div class="a" style="left:1666px;top:259.5px;width:50.700000000000045px;height:37px;border:2px solid #6a6a6a;border-radius:13px;"></div>
<div class="t" style='left:1678.83px;top:266.65px;font-size:23.8px;color:#e3e3e3;letter-spacing:-0.055px;-webkit-text-stroke:0.650px currentColor;'>All</div>
<div class="a" style="left:1882.5px;top:259.5px;width:65.09999999999991px;height:37px;border:2px solid #6a6a6a;border-radius:13px;"></div>
<div class="t" style='left:1893.33px;top:266.65px;font-size:23.8px;color:#e3e3e3;letter-spacing:-0.185px;-webkit-text-stroke:0.650px currentColor;'>Doc</div>
<div class="a" style="left:1956px;top:259.5px;width:68px;height:37px;border:2px solid #6a6a6a;border-radius:13px;"></div>
<div class="t" style='left:1967.73px;top:266.65px;font-size:23.8px;color:#e3e3e3;transform:scaleX(0.9223);transform-origin:0.68px 0;-webkit-text-stroke:0.650px currentColor;'>CSS</div>
<div class="a" style="left:2033px;top:259.5px;width:50.59999999999991px;height:37px;border:2px solid #6a6a6a;border-radius:13px;"></div>
<div class="t" style='left:2045.33px;top:266.65px;font-size:23.8px;color:#e3e3e3;transform:scaleX(0.9438);transform-origin:-0.33px 0;-webkit-text-stroke:0.650px currentColor;'>JS</div>
<div class="a" style="left:2092px;top:259.5px;width:71px;height:37px;border:2px solid #6a6a6a;border-radius:13px;"></div>
<div class="t" style='left:2103.22px;top:266.65px;font-size:23.8px;color:#e3e3e3;letter-spacing:-0.085px;-webkit-text-stroke:0.650px currentColor;'>Font</div>
<div class="a" style="left:2172px;top:259.5px;width:63.80000000000018px;height:37px;border:2px solid #6a6a6a;border-radius:13px;"></div>
<div class="t" style='left:2182.32px;top:266.65px;font-size:23.8px;color:#e3e3e3;letter-spacing:0.958px;-webkit-text-stroke:0.650px currentColor;'>Img</div>
<div class="a" style="left:2244.5px;top:259.5px;width:88.30000000000018px;height:37px;border:2px solid #6a6a6a;border-radius:13px;"></div>
<div class="t" style='left:2255.72px;top:266.65px;font-size:23.8px;color:#e3e3e3;letter-spacing:-0.482px;-webkit-text-stroke:0.650px currentColor;'>Media</div>
<div class="a" style="left:2341.4px;top:259.5px;width:115.19999999999982px;height:37px;border:2px solid #6a6a6a;border-radius:13px;"></div>
<div class="t" style='left:2352.32px;top:266.65px;font-size:23.8px;color:#e3e3e3;letter-spacing:0.218px;-webkit-text-stroke:0.650px currentColor;'>Manifest</div>
<div class="a" style="left:2465.3px;top:259.5px;width:97.5px;height:37px;border:2px solid #6a6a6a;border-radius:13px;"></div>
<div class="t" style='left:2476.82px;top:266.65px;font-size:23.8px;color:#e3e3e3;letter-spacing:-0.058px;-webkit-text-stroke:0.650px currentColor;'>Socket</div>
<div class="a" style="left:2571.5px;top:259.5px;width:88.30000000000018px;height:37px;border:2px solid #6a6a6a;border-radius:13px;"></div>
<div class="t" style='left:2583.72px;top:266.65px;font-size:23.8px;color:#e3e3e3;transform:scaleX(0.9584);transform-origin:-0.33px 0;-webkit-text-stroke:0.650px currentColor;'>Wasm</div>
<div class="a" style="left:2668.4px;top:259.5px;width:84.29999999999973px;height:37px;border:2px solid #6a6a6a;border-radius:13px;"></div>
<div class="t" style='left:2679.32px;top:266.65px;font-size:23.8px;color:#e3e3e3;letter-spacing:0.115px;-webkit-text-stroke:0.650px currentColor;'>Other</div>
<div class="a" style="left:1725px;top:262px;width:2px;height:31.600000000000023px;background:#5e5e5e"></div>
<div class="a" style="left:1735px;top:259.5px;width:138.8px;height:37px;background:#1c4a78;border-radius:13px;"></div>
<div class="t" style='left:1747.23px;top:266.65px;font-size:23.8px;color:#d3e3fd;letter-spacing:-0.292px;-webkit-text-stroke:0.650px currentColor;'>Fetch/XHR</div>
<div class="a" style="left:1658px;top:302px;width:1222px;height:2px;background:#5a5a5a;"></div>
<div class="a" style="left:1876.3px;top:304px;width:2px;height:161px;background:#525252;"></div>
<div class="a" style="left:2094.2px;top:304px;width:2px;height:161px;background:#525252;"></div>
<div class="a" style="left:2312.1px;top:304px;width:2px;height:161px;background:#525252;"></div>
<div class="a" style="left:2530.0px;top:304px;width:2px;height:161px;background:#525252;"></div>
<div class="a" style="left:2747.9px;top:304px;width:2px;height:161px;background:#525252;"></div>
<div class="t" style='left:1774.00px;top:314.30px;font-size:21.5px;color:#e3e3e3;letter-spacing:-0.268px;'>10,000 ms</div>
<div class="t" style='left:1991.90px;top:314.30px;font-size:21.5px;color:#e3e3e3;letter-spacing:-0.268px;'>20,000 ms</div>
<div class="t" style='left:2211.10px;top:314.30px;font-size:21.5px;color:#e3e3e3;letter-spacing:-0.393px;'>30,000 ms</div>
<div class="t" style='left:2428.70px;top:314.30px;font-size:21.5px;color:#e3e3e3;letter-spacing:-0.393px;'>40,000 ms</div>
<div class="t" style='left:2646.60px;top:314.30px;font-size:21.5px;color:#e3e3e3;letter-spacing:-0.393px;'>50,000 ms</div>
<div class="t" style='left:2862.00px;top:314.30px;font-size:21.5px;color:#e3e3e3;'>6</div>
<div class="a" style="left:1662px;top:360.4px;width:55.5px;height:4.2px;background:#5dc264;"></div>
<div class="a" style="left:1718.7px;top:360.4px;width:18.8px;height:4.2px;background:#5a8df0;"></div>
<div class="a" style="left:1666px;top:366.4px;width:60.8px;height:4.2px;background:#5dc264;"></div>
<div class="a" style="left:1728px;top:366.4px;width:19px;height:4.2px;background:#5a8df0;"></div>
<div class="a" style="left:1728px;top:372.4px;width:19px;height:4.2px;background:#5a8df0;"></div>
<div class="a" style="left:1728px;top:378.4px;width:19px;height:4.2px;background:#5a8df0;"></div>
<div class="a" style="left:1898.4px;top:384.4px;width:52.6px;height:4.2px;background:#5dc264;"></div>
<div class="a" style="left:1952.5px;top:384.4px;width:18.8px;height:4.2px;background:#5a8df0;"></div>
<div class="a" style="left:1898.4px;top:390.4px;width:53.6px;height:4.2px;background:#5dc264;"></div>
<div class="a" style="left:1953.4px;top:390.4px;width:18.6px;height:4.2px;background:#5a8df0;"></div>
<div class="a" style="left:1898.4px;top:396.4px;width:57.9px;height:4.2px;background:#5dc264;"></div>
<div class="a" style="left:1957.7px;top:396.4px;width:18.8px;height:4.2px;background:#5a8df0;"></div>
<div class="a" style="left:1898.4px;top:402.4px;width:59.3px;height:4.2px;background:#5dc264;"></div>
<div class="a" style="left:1959px;top:402.4px;width:19px;height:4.2px;background:#5a8df0;"></div>
<div class="a" style="left:1953.4px;top:408.4px;width:37.6px;height:4.2px;background:#5dc264;"></div>
<div class="a" style="left:1992.5px;top:408.4px;width:18.8px;height:4.2px;background:#5a8df0;"></div>
<div class="a" style="left:1898.4px;top:414.4px;width:131.6px;height:4.2px;background:#5dc264;"></div>
<div class="a" style="left:2031.5px;top:414.4px;width:18.8px;height:4.2px;background:#5a8df0;"></div>
<div class="a" style="left:1898.4px;top:420.4px;width:206.9px;height:4.2px;background:#5dc264;"></div>
<div class="a" style="left:2106.8px;top:420.4px;width:18.8px;height:4.2px;background:#5a8df0;"></div>
<div class="a" style="left:2277.8px;top:426.4px;width:18.8px;height:4.2px;background:#5a8df0;"></div>
<div class="a" style="left:2277.8px;top:432.4px;width:56.9px;height:4.2px;background:#5dc264;"></div>
<div class="a" style="left:2336px;top:432.4px;width:18.5px;height:4.2px;background:#5a8df0;"></div>
<div class="a" style="left:2277.8px;top:438.4px;width:69.2px;height:4.2px;background:#5dc264;"></div>
<div class="a" style="left:2348.5px;top:438.4px;width:18.3px;height:4.2px;background:#5a8df0;"></div>
<div class="a" style="left:2277.8px;top:444.4px;width:75.2px;height:4.2px;background:#5dc264;"></div>
<div class="a" style="left:2354.5px;top:444.4px;width:18.3px;height:4.2px;background:#5a8df0;"></div>
<div class="a" style="left:2277.8px;top:450.4px;width:94.0px;height:4.2px;background:#5dc264;"></div>
<div class="a" style="left:2373px;top:450.4px;width:18.5px;height:4.2px;background:#5a8df0;"></div>
<div class="a" style="left:2348.5px;top:456.4px;width:58.9px;height:4.2px;background:#5dc264;"></div>
<div class="a" style="left:2408.8px;top:456.4px;width:18.2px;height:4.2px;background:#5a8df0;"></div>
<div class="a" style="left:2408.9px;top:360.4px;width:98.4px;height:4.2px;background:#5dc264;"></div>
<div class="a" style="left:2508.7px;top:360.4px;width:18.8px;height:4.2px;background:#5a8df0;"></div>
<div class="a" style="left:2508.7px;top:366.4px;width:67.3px;height:4.2px;background:#5dc264;"></div>
<div class="a" style="left:2577.6px;top:366.4px;width:18.4px;height:4.2px;background:#5a8df0;"></div>
<div class="a" style="left:2577.6px;top:372.4px;width:77.2px;height:4.2px;background:#5dc264;"></div>
<div class="a" style="left:2656.3px;top:372.4px;width:18.2px;height:4.2px;background:#5a8df0;"></div>
<div class="a" style="left:2656.3px;top:378.4px;width:18.2px;height:4.2px;background:#5a8df0;"></div>
<div class="a" style="left:2656.3px;top:384.4px;width:48.3px;height:4.2px;background:#5dc264;"></div>
<div class="a" style="left:2706px;top:384.4px;width:18.3px;height:4.2px;background:#5a8df0;"></div>
<div class="a" style="left:2706px;top:390.4px;width:18.3px;height:4.2px;background:#5a8df0;"></div>
<div class="a" style="left:2722px;top:396.4px;width:11.6px;height:4.2px;background:#5a8df0;"></div>
<div class="a" style="left:2722px;top:402.4px;width:13px;height:4.2px;background:#5a8df0;"></div>
<div class="a" style="left:2722px;top:408.4px;width:13px;height:4.2px;background:#5a8df0;"></div>
<div class="a" style="left:2715px;top:414.4px;width:43px;height:4.2px;background:#5dc264;"></div>
<div class="a" style="left:2759.6px;top:414.4px;width:18.8px;height:4.2px;background:#5a8df0;"></div>
<div class="a" style="left:2652px;top:393px;width:69.4px;height:20.4px;background:#1c4a78;"></div>
<div class="a" style="left:2655.4px;top:397px;width:61.6px;height:10.3px;background:#5dc264;"></div>
<div class="a" style="left:2717px;top:397px;width:2.5px;height:10.3px;background:#5a8df0;"></div>
<div class="a" style="left:1658px;top:342px;width:4px;height:123px;background:#3a86c8;"></div>
<div class="a" style="left:1658px;top:304px;width:10px;height:38px;background:#1c4a78;border:2px solid #3a86c8;border-left:none;border-radius:0 7px 7px 0;"></div>
<div class="a" style="left:1659.8px;top:316px;width:2.2px;height:14px;background:#b9d2fb;"></div>
<div class="a" style="left:2876px;top:342px;width:4px;height:123px;background:#3a86c8;"></div>
<div class="a" style="left:2869.8px;top:304px;width:10.2px;height:38px;background:#1c4a78;border:2px solid #3a86c8;border-right:none;border-radius:7px 0 0 7px;"></div>
<div class="a" style="left:2875.8px;top:316px;width:2.3px;height:14px;background:#b9d2fb;"></div>
<div class="a" style="left:1658px;top:464px;width:1222px;height:2px;background:#5a5a5a;"></div>
<div class="a" style="left:1658px;top:466px;width:302px;height:52px;background:#27282c;"></div>
<div class="a" style="left:1658px;top:518px;width:302px;height:2px;background:#5a5a5a;"></div>
<div class="a" style="left:1658px;top:466px;width:2px;height:52px;background:#5a5a5a;"></div>
<div class="t" style='left:1668.00px;top:481.85px;font-size:23.8px;color:#e3e3e3;letter-spacing:0.586px;'>Name</div>
<div class="a" style="left:1658px;top:520px;width:302px;height:24.3px;background:#27282c;"></div>
<div class="a" style="left:1658px;top:544px;width:302px;height:42.3px;background:#1f1f1f;"></div>
<div class="a" style="left:1658px;top:586px;width:302px;height:42.3px;background:#27282c;"></div>
<div class="a" style="left:1658px;top:628px;width:302px;height:42.3px;background:#1f1f1f;"></div>
<div class="a" style="left:1658px;top:670px;width:302px;height:42.3px;background:#27282c;"></div>
<div class="a" style="left:1658px;top:712px;width:302px;height:42.3px;background:#1f1f1f;"></div>
<div class="a" style="left:1658px;top:754px;width:302px;height:42.3px;background:#27282c;"></div>
<div class="a" style="left:1658px;top:796px;width:302px;height:42.3px;background:#1f1f1f;"></div>
<div class="a" style="left:1658px;top:838px;width:302px;height:42.3px;background:#27282c;"></div>
<div class="a" style="left:1658px;top:880px;width:302px;height:42.3px;background:#1f1f1f;"></div>
<div class="a" style="left:1658px;top:922px;width:302px;height:42.3px;background:#1f4a77;"></div>
<div class="a" style="left:1658px;top:964px;width:302px;height:42.3px;background:#1f1f1f;"></div>
<div class="a" style="left:1658px;top:1006px;width:302px;height:42.3px;background:#27282c;"></div>
<div class="a" style="left:1658px;top:1048px;width:302px;height:42.3px;background:#1f1f1f;"></div>
<div class="a" style="left:1658px;top:520px;width:302px;height:571px;overflow:hidden">
<svg style="left:12px;top:-8.2px" width="25" height="24" viewBox="0 0 25 24"><path d="M4.100 1.300H15.300L21.800 7.800V19.400a2 2 0 0 1-2 2H4.100a2 2 0 0 1-2-2V3.300a2 2 0 0 1 2-2Z" fill="none" stroke="#d4d4d4" stroke-width="2.600" stroke-linejoin="round"/><path d="M14.800 1.300V8.300H21.800Z" fill="#d4d4d4" stroke="#d4d4d4" stroke-width="1" stroke-linejoin="round"/></svg>
<svg style="left:12px;top:33.8px" width="25" height="24" viewBox="0 0 25 24"><path d="M4.100 1.300H15.300L21.800 7.800V19.400a2 2 0 0 1-2 2H4.100a2 2 0 0 1-2-2V3.300a2 2 0 0 1 2-2Z" fill="none" stroke="#d4d4d4" stroke-width="2.600" stroke-linejoin="round"/><path d="M14.800 1.300V8.300H21.800Z" fill="#d4d4d4" stroke="#d4d4d4" stroke-width="1" stroke-linejoin="round"/></svg>
<svg style="left:12px;top:75.8px" width="25" height="24" viewBox="0 0 25 24"><path d="M4.100 1.300H15.300L21.800 7.800V19.400a2 2 0 0 1-2 2H4.100a2 2 0 0 1-2-2V3.300a2 2 0 0 1 2-2Z" fill="none" stroke="#d4d4d4" stroke-width="2.600" stroke-linejoin="round"/><path d="M14.800 1.300V8.300H21.800Z" fill="#d4d4d4" stroke="#d4d4d4" stroke-width="1" stroke-linejoin="round"/></svg>
<svg style="left:12px;top:117.8px" width="25" height="24" viewBox="0 0 25 24"><path d="M4.100 1.300H15.300L21.800 7.800V19.400a2 2 0 0 1-2 2H4.100a2 2 0 0 1-2-2V3.300a2 2 0 0 1 2-2Z" fill="none" stroke="#d4d4d4" stroke-width="2.600" stroke-linejoin="round"/><path d="M14.800 1.300V8.300H21.800Z" fill="#d4d4d4" stroke="#d4d4d4" stroke-width="1" stroke-linejoin="round"/></svg>
<svg style="left:12px;top:159.8px" width="25" height="24" viewBox="0 0 25 24"><path d="M4.100 1.300H15.300L21.800 7.800V19.400a2 2 0 0 1-2 2H4.100a2 2 0 0 1-2-2V3.300a2 2 0 0 1 2-2Z" fill="none" stroke="#d4d4d4" stroke-width="2.600" stroke-linejoin="round"/><path d="M14.800 1.300V8.300H21.800Z" fill="#d4d4d4" stroke="#d4d4d4" stroke-width="1" stroke-linejoin="round"/></svg>
<svg style="left:12px;top:201.8px" width="25" height="24" viewBox="0 0 25 24"><path d="M4.100 1.300H15.300L21.800 7.800V19.400a2 2 0 0 1-2 2H4.100a2 2 0 0 1-2-2V3.300a2 2 0 0 1 2-2Z" fill="none" stroke="#d4d4d4" stroke-width="2.600" stroke-linejoin="round"/><path d="M14.800 1.300V8.300H21.800Z" fill="#d4d4d4" stroke="#d4d4d4" stroke-width="1" stroke-linejoin="round"/></svg>
<svg style="left:12px;top:243.8px" width="25" height="24" viewBox="0 0 25 24"><path d="M4.100 1.300H15.300L21.800 7.800V19.400a2 2 0 0 1-2 2H4.100a2 2 0 0 1-2-2V3.300a2 2 0 0 1 2-2Z" fill="none" stroke="#d4d4d4" stroke-width="2.600" stroke-linejoin="round"/><path d="M14.800 1.300V8.300H21.800Z" fill="#d4d4d4" stroke="#d4d4d4" stroke-width="1" stroke-linejoin="round"/></svg>
<svg style="left:12px;top:285.8px" width="25" height="24" viewBox="0 0 25 24"><path d="M4.100 1.300H15.300L21.800 7.800V19.400a2 2 0 0 1-2 2H4.100a2 2 0 0 1-2-2V3.300a2 2 0 0 1 2-2Z" fill="none" stroke="#d4d4d4" stroke-width="2.600" stroke-linejoin="round"/><path d="M14.800 1.300V8.300H21.800Z" fill="#d4d4d4" stroke="#d4d4d4" stroke-width="1" stroke-linejoin="round"/></svg>
<svg style="left:12px;top:327.8px" width="25" height="24" viewBox="0 0 25 24"><path d="M4.100 1.300H15.300L21.800 7.800V19.400a2 2 0 0 1-2 2H4.100a2 2 0 0 1-2-2V3.300a2 2 0 0 1 2-2Z" fill="none" stroke="#d4d4d4" stroke-width="2.600" stroke-linejoin="round"/><path d="M14.800 1.300V8.300H21.800Z" fill="#d4d4d4" stroke="#d4d4d4" stroke-width="1" stroke-linejoin="round"/></svg>
<svg style="left:12px;top:369.8px" width="25" height="24" viewBox="0 0 25 24"><path d="M4.100 1.300H15.300L21.800 7.800V19.400a2 2 0 0 1-2 2H4.100a2 2 0 0 1-2-2V3.300a2 2 0 0 1 2-2Z" fill="none" stroke="#d4d4d4" stroke-width="2.600" stroke-linejoin="round"/><path d="M14.800 1.300V8.300H21.800Z" fill="#d4d4d4" stroke="#d4d4d4" stroke-width="1" stroke-linejoin="round"/></svg>
<svg style="left:12px;top:411.8px" width="25" height="24" viewBox="0 0 25 24"><path d="M4.100 1.300H15.300L21.800 7.800V19.400a2 2 0 0 1-2 2H4.100a2 2 0 0 1-2-2V3.300a2 2 0 0 1 2-2Z" fill="none" stroke="#d9d4d0" stroke-width="2.600" stroke-linejoin="round"/><path d="M14.800 1.300V8.300H21.800Z" fill="#d9d4d0" stroke="#d9d4d0" stroke-width="1" stroke-linejoin="round"/></svg>
<svg style="left:12px;top:453.8px" width="25" height="24" viewBox="0 0 25 24"><path d="M4.100 1.300H15.300L21.800 7.800V19.400a2 2 0 0 1-2 2H4.100a2 2 0 0 1-2-2V3.300a2 2 0 0 1 2-2Z" fill="none" stroke="#d4d4d4" stroke-width="2.600" stroke-linejoin="round"/><path d="M14.800 1.300V8.300H21.800Z" fill="#d4d4d4" stroke="#d4d4d4" stroke-width="1" stroke-linejoin="round"/></svg>
<svg style="left:12px;top:495.8px" width="25" height="24" viewBox="0 0 25 24"><path d="M4.100 1.300H15.300L21.800 7.800V19.400a2 2 0 0 1-2 2H4.100a2 2 0 0 1-2-2V3.300a2 2 0 0 1 2-2Z" fill="none" stroke="#d4d4d4" stroke-width="2.600" stroke-linejoin="round"/><path d="M14.800 1.300V8.300H21.800Z" fill="#d4d4d4" stroke="#d4d4d4" stroke-width="1" stroke-linejoin="round"/></svg>
<svg style="left:12px;top:537.8px" width="25" height="24" viewBox="0 0 25 24"><path d="M4.100 1.300H15.300L21.800 7.800V19.400a2 2 0 0 1-2 2H4.100a2 2 0 0 1-2-2V3.300a2 2 0 0 1 2-2Z" fill="none" stroke="#d4d4d4" stroke-width="2.600" stroke-linejoin="round"/><path d="M14.800 1.300V8.300H21.800Z" fill="#d4d4d4" stroke="#d4d4d4" stroke-width="1" stroke-linejoin="round"/></svg>
</div>
<div class="t" style='left:1704.10px;top:552.84px;font-size:25px;color:#e3e3e3;letter-spacing:0.412px;-webkit-text-stroke:0.200px currentColor;'>bridgeService.php</div>
<div class="t" style='left:1704.10px;top:594.84px;font-size:25px;color:#e3e3e3;letter-spacing:0.412px;-webkit-text-stroke:0.200px currentColor;'>bridgeService.php</div>
<div class="t" style='left:1704.10px;top:636.84px;font-size:25px;color:#e3e3e3;letter-spacing:0.412px;-webkit-text-stroke:0.200px currentColor;'>bridgeService.php</div>
<div class="t" style='left:1704.10px;top:678.84px;font-size:25px;color:#e3e3e3;letter-spacing:0.412px;-webkit-text-stroke:0.200px currentColor;'>bridgeService.php</div>
<div class="t" style='left:1704.10px;top:720.84px;font-size:25px;color:#e3e3e3;letter-spacing:0.412px;-webkit-text-stroke:0.200px currentColor;'>bridgeService.php</div>
<div class="t" style='left:1704.10px;top:762.84px;font-size:25px;color:#e3e3e3;letter-spacing:0.412px;-webkit-text-stroke:0.200px currentColor;'>bridgeService.php</div>
<div class="t" style='left:1704.10px;top:804.84px;font-size:25px;color:#e3e3e3;letter-spacing:0.412px;-webkit-text-stroke:0.200px currentColor;'>bridgeService.php</div>
<div class="t" style='left:1704.10px;top:846.84px;font-size:25px;color:#e3e3e3;letter-spacing:0.412px;-webkit-text-stroke:0.200px currentColor;'>bridgeService.php</div>
<div class="t" style='left:1704.10px;top:888.84px;font-size:25px;color:#e3e3e3;letter-spacing:0.412px;-webkit-text-stroke:0.200px currentColor;'>bridgeService.php</div>
<div class="t" style='left:1704.10px;top:930.84px;font-size:25px;color:#d3e3fd;letter-spacing:0.412px;-webkit-text-stroke:0.200px currentColor;'>bridgeService.php</div>
<div class="t" style='left:1704.10px;top:972.84px;font-size:25px;color:#e3e3e3;letter-spacing:0.412px;-webkit-text-stroke:0.200px currentColor;'>bridgeService.php</div>
<div class="t" style='left:1704.10px;top:1014.84px;font-size:25px;color:#e3e3e3;letter-spacing:0.412px;-webkit-text-stroke:0.200px currentColor;'>bridgeService.php</div>
<div class="t" style='left:1704.10px;top:1056.84px;font-size:25px;color:#e3e3e3;letter-spacing:0.412px;-webkit-text-stroke:0.200px currentColor;'>bridgeService.php</div>
<div class="a" style="left:1658px;top:520px;width:302px;height:24px;overflow:hidden">
<div class="t" style="left:45.300px;top:-9.2px;font-size:25px;color:#e3e3e3;letter-spacing:0.420px;-webkit-text-stroke:0.200px currentColor;">bridgeService.php</div>
</div>
<div class="a" style="left:1658px;top:1090px;width:302px;height:2px;background:#5a5a5a;"></div>
<div class="t" style='left:1679.10px;top:1106.55px;font-size:23.8px;color:#c7c7c7;letter-spacing:0.896px;-webkit-text-stroke:0.200px currentColor;'>36 / 58 requests</div>
<div class="a" style="left:1882px;top:1102px;width:2px;height:32px;background:#5e5e5e"></div>
<div class="a" style="left:1899px;top:1096px;width:61px;height:44px;overflow:hidden"><div class="t" style="left:-7.500px;top:10.6px;font-size:23.8px;color:#c7c7c7;letter-spacing:0.700px;-webkit-text-stroke:0.200px currentColor;">2.2 kB</div></div>
<div class="a" style="left:1960px;top:466px;width:2px;height:679px;background:#5a5a5a;"></div>
<div class="a" style="left:1962px;top:466px;width:918px;height:52px;background:#3c3c3c;"></div>
<div class="a" style="left:1962px;top:518px;width:918px;height:2px;background:#5a5a5a;"></div>
<svg style="left:1991px;top:480.5px" width="22" height="22" viewBox="1991 480.5 22 22"><path d="M1993 482.5L2011 500.5M2011 482.5L1993 500.5" stroke="#c7c7c7" stroke-width="2.5" fill="none"/></svg>
<div class="t" style='left:2053.72px;top:483.15px;font-size:23.8px;color:#c7c7c7;letter-spacing:1.034px;-webkit-text-stroke:0.650px currentColor;'>Headers</div>
<div class="t" style='left:2191.62px;top:483.15px;font-size:23.8px;color:#c7c7c7;letter-spacing:0.931px;-webkit-text-stroke:0.650px currentColor;'>Payload</div>
<div class="t" style='left:2324.12px;top:483.15px;font-size:23.8px;color:#a8c7fa;letter-spacing:0.816px;-webkit-text-stroke:0.650px currentColor;'>Preview</div>
<div class="t" style='left:2456.12px;top:483.15px;font-size:23.8px;color:#c7c7c7;letter-spacing:0.661px;-webkit-text-stroke:0.650px currentColor;'>Response</div>
<div class="t" style='left:2608.32px;top:483.15px;font-size:23.8px;color:#c7c7c7;letter-spacing:1.467px;-webkit-text-stroke:0.650px currentColor;'>Initiator</div>
<div class="t" style='left:2741.32px;top:483.15px;font-size:23.8px;color:#c7c7c7;letter-spacing:1.353px;-webkit-text-stroke:0.650px currentColor;'>Timing</div>
<div class="a" style="left:2303.5px;top:514.5px;width:132.5px;height:5px;background:#a8c7fa;border-radius:5px 5px 0 0;"></div>
<svg style="left:2846px;top:480px" width="28" height="24" viewBox="2846 480 28 24"><path d="M2849.500 482.500L2859 492L2849.500 501.500M2861 482.500L2870.500 492L2861 501.500" fill="none" stroke="#c7c7c7" stroke-width="2.500"/></svg>
<div class="a" style="left:2001px;top:559px;width:840px;height:545px;background:#fff;overflow:hidden;box-shadow:0 0 0 1.500px #8a8a8a, 0 2px 8px rgba(0,0,0,.5);font-family:'Liberation Serif',serif;font-size:32px;color:#000;">
<div class="t" style="left:17.500px;top:41.4px"><b>Warning</b>:</div>
<div class="t" style="left:17.500px;top:78.4px">file_get_contents(/Users/jorge/Documents/Projects/SUMAC-</div>
<div class="t" style="left:17.500px;top:115.4px">SC/service/../../documentFileSystem/2025/Supremo/Principal/1762</div>
<div class="t" style="left:17.500px;top:152.4px">3228efda856812298985fb7c078ebc34.pdf): Failed to open</div>
<div class="t" style="left:17.500px;top:189.4px">stream: No such file or directory in</div>
<div class="t" style="left:17.500px;top:226.4px"><b>/Users/jorge/Documents/Projects/SUMAC-</b></div>
<div class="t" style="left:17.500px;top:263.4px"><b>SC/service/backend/utilities/helpers/fileHelpers.php</b> on line</div>
<div class="t" style="left:17.500px;top:300.4px"><b>60</b></div>
<div class="t" style="left:17.500px;top:337.4px">{"success":true,"response":</div>
<div class="t" style="left:17.500px;top:374.4px">{"recourseFilingId":563,"recourseId":480,"filingDateCreated":"2025-</div>
<div class="t" style="left:17.500px;top:411.4px">11-07 14:37:55.840","documentDateCreated":"2025-11-07</div>
<div class="t" style="left:17.500px;top:448.4px">14:38:01.630","filingDocumentId":602,"documentRoleCode":16,</div>
<div class="t" style="left:17.500px;top:485.4px">3228efda856812298985fb7c078ebc34.pdf","fileExtension":"pdf",</div>
<div class="t" style="left:17.500px;top:522.4px">3228efda856812298985fb7c078ebc34.pdf","content":null,"base64</div>
</div>
<div class="a" style="left:1658px;top:1144px;width:1222px;height:2px;background:#5a5a5a;"></div>
<div class="a" style="left:1658px;top:1146px;width:1222px;height:54px;background:#3c3c3c;"></div>
<div class="a" style="left:1658px;top:1200px;width:1222px;height:2px;background:#5a5a5a;"></div>
<div class="a" style="left:1686.8999999999999px;top:1159.8px;width:5.8px;height:5.8px;border-radius:2.9px;background:#c7c7c7"></div><div class="a" style="left:1686.8999999999999px;top:1169.3999999999999px;width:5.8px;height:5.8px;border-radius:2.9px;background:#c7c7c7"></div><div class="a" style="left:1686.8999999999999px;top:1178.8999999999999px;width:5.8px;height:5.8px;border-radius:2.9px;background:#c7c7c7"></div>
<div class="t" style='left:1734.33px;top:1162.85px;font-size:23.8px;color:#a8c7fa;letter-spacing:0.963px;-webkit-text-stroke:0.650px currentColor;'>Console</div>
<div class="a" style="left:1713.8px;top:1195.5px;width:134px;height:5px;background:#a8c7fa;border-radius:5px 5px 0 0;"></div>
<svg style="left:2772px;top:1158px" width="32" height="30" viewBox="2772 1158 32 30"><rect x="2775.500" y="1159.500" width="25.500" height="25.500" rx="2" fill="none" stroke="#c7c7c7" stroke-width="2.500"/><path d="M2792.500 1159.500V1185" stroke="#c7c7c7" stroke-width="2.500"/></svg>
<svg style="left:2831.4px;top:1161.5px" width="22" height="22" viewBox="2831.4 1161.5 22 22"><path d="M2833.4 1163.5L2851.4 1181.5M2851.4 1163.5L2833.4 1181.5" stroke="#c7c7c7" stroke-width="2.5" fill="none"/></svg>
<div class="a" style="left:1658px;top:1252px;width:1222px;height:2px;background:#5a5a5a;"></div>
<svg style="left:1674px;top:1210px" width="32" height="32" viewBox="1674 1210 32 32"><rect x="1677.300" y="1213.800" width="25" height="24.500" rx="2" fill="none" stroke="#c7c7c7" stroke-width="2.500"/><path d="M1685 1213.800V1238.300" stroke="#c7c7c7" stroke-width="2.500"/><path d="M1690.500 1220L1697.500 1226L1690.500 1232Z" fill="#c7c7c7"/></svg>
<svg style="left:1730.7px;top:1211.1000000000001px" width="30.6" height="30.6" viewBox="1730.7 1211.1000000000001 30.6 30.6"><circle cx="1746" cy="1226.4" r="13.3" fill="none" stroke="#c7c7c7" stroke-width="2.5"/><path d="M1736.59557 1235.8044300000001L1755.40443 1216.99557" stroke="#c7c7c7" stroke-width="2.5"/></svg>
<div class="a" style="left:1782px;top:1210.5px;width:2px;height:31.200000000000045px;background:#5e5e5e"></div>
<div class="t" style='left:1808.70px;top:1215.45px;font-size:23.8px;color:#e3e3e3;letter-spacing:1.227px;'>top</div>
<svg style="left:1854.1px;top:1220.5px" width="17.300000000000182" height="13.5" viewBox="1854.1 1220.5 17.300000000000182 13.5"><path d="M1855.1 1221.5H1870.4L1862.75 1233Z" fill="#c7c7c7"/></svg>
<div class="a" style="left:1893px;top:1210.5px;width:2px;height:31.200000000000045px;background:#5e5e5e"></div>
<svg style="left:1911px;top:1212px" width="40" height="28" viewBox="1911 1212 40 28"><path d="M1914 1225.700C1921 1211.500 1941.500 1211.500 1948.500 1225.700C1941.500 1240 1921 1240 1914 1225.700Z" fill="none" stroke="#c7c7c7" stroke-width="2.600"/><circle cx="1931.200" cy="1225.700" r="5.500" fill="none" stroke="#c7c7c7" stroke-width="2.600"/></svg>
<div class="a" style="left:1966.9px;top:1210.5px;width:2px;height:31.200000000000045px;background:#5e5e5e"></div>
<div class="a" style="left:1983px;top:1206px;width:334.8px;height:40px;background:#3d3d3d;border-radius:20px;"></div>
<svg style="left:2004px;top:1215.5px" width="22" height="23" viewBox="2004 1215.5 22 23"><path d="M2006.2 1217.7H2023L2016.3 1226.5V1235.5H2012.9V1226.5Z" fill="none" stroke="#c7c7c7" stroke-width="2.400" stroke-linejoin="miter"/></svg>
<div class="t" style='left:2039.00px;top:1215.37px;font-size:23.9px;color:#c7c7c7;letter-spacing:0.733px;'>Filter</div>
<div class="t" style='left:2339.60px;top:1215.45px;font-size:23.8px;color:#e3e3e3;letter-spacing:0.727px;'>Default levels</div>
<svg style="left:2501.6px;top:1220.5px" width="17.200000000000273" height="13.5" viewBox="2501.6 1220.5 17.200000000000273 13.5"><path d="M2502.6 1221.5H2517.8L2510.2 1233Z" fill="#c7c7c7"/></svg>
<div class="a" style="left:2540.3px;top:1210.5px;width:2px;height:31.200000000000045px;background:#5e5e5e"></div>
<div class="t" style='left:2553.70px;top:1215.45px;font-size:23.8px;color:#e3e3e3;letter-spacing:0.760px;'>34 Issues:</div>
<svg style="left:2682px;top:1215px" width="22" height="21" viewBox="2682 1215 22 21"><path d="M2685 1216H2701a2 2 0 0 1 2 2V1229a2 2 0 0 1-2 2H2688L2683 1235V1218a2 2 0 0 1 2-2Z" fill="#dd7168"/><path d="M2689.8 1220.3L2696.2 1226.7M2696.2 1220.3L2689.8 1226.7" stroke="#282828" stroke-width="2.200" fill="none"/></svg>
<div class="t" style='left:2709.40px;top:1215.45px;font-size:23.8px;color:#e3e3e3;'>5</div>
<svg style="left:2735.6px;top:1215px" width="22" height="21" viewBox="2735.6 1215 22 21"><path d="M2738.6 1216H2754.6a2 2 0 0 1 2 2V1229a2 2 0 0 1-2 2H2741.6L2736.6 1235V1218a2 2 0 0 1 2-2Z" fill="#7ca9f5"/><path d="M2741.1 1220.2H2752.1M2741.1 1223.5H2752.1M2741.1 1226.8H2748.6" stroke="#282828" stroke-width="1.800" fill="none"/></svg>
<div class="t" style='left:2762.30px;top:1215.45px;font-size:23.8px;color:#e3e3e3;letter-spacing:2.465px;'>29</div>
<div class="a" style="left:2805.8px;top:1210.5px;width:2px;height:31.200000000000045px;background:#5e5e5e"></div>
<svg style="left:2824.1px;top:1209.1px" width="35" height="35" viewBox="2824.1 1209.1 35 35"><path d="M2838.68 1216.15L2839.16 1212.28L2843.64 1212.28L2844.12 1216.15L2846.72 1217.23L2849.81 1214.83L2852.97 1217.99L2850.57 1221.08L2851.65 1223.68L2855.52 1224.16L2855.52 1228.64L2851.65 1229.12L2850.57 1231.72L2852.97 1234.81L2849.81 1237.97L2846.72 1235.57L2844.12 1236.65L2843.64 1240.52L2839.16 1240.52L2838.68 1236.65L2836.08 1235.57L2832.99 1237.97L2829.83 1234.81L2832.23 1231.72L2831.15 1229.12L2827.28 1228.64L2827.28 1224.16L2831.15 1223.68L2832.23 1221.08L2829.83 1217.99L2832.99 1214.83L2836.08 1217.23Z" fill="none" stroke="#c7c7c7" stroke-width="2.9" stroke-linejoin="round"/><circle cx="2841.4" cy="1226.4" r="4.3" fill="none" stroke="#c7c7c7" stroke-width="2.9"/></svg>
<div class="a" style="left:1666.3px;top:1262.2px;width:1205.7px;height:137.5px;background:#4b3636;border-radius:11px;"></div>
<div class="a" style="left:1666.3px;top:1408.1px;width:1205.7px;height:33.8px;background:#4b3636;border-radius:11px;"></div>
<div class="a" style="left:1666.3px;top:1449.9px;width:1205.7px;height:34.2px;background:#4b3636;border-radius:11px;"></div>
<svg style="left:1681.8px;top:1268px" width="24" height="24" viewBox="1681.8 1268 24 24"><circle cx="1693.8" cy="1280" r="11" fill="#dd7168"/><path d="M1689.18 1275.38L1698.4199999999998 1284.62M1698.4199999999998 1275.38L1689.18 1284.62" stroke="#4b3636" stroke-width="2.400" fill="none"/></svg>
<svg style="left:1681.8px;top:1413.5px" width="24" height="24" viewBox="1681.8 1413.5 24 24"><circle cx="1693.8" cy="1425.5" r="11" fill="#dd7168"/><path d="M1689.18 1420.88L1698.4199999999998 1430.12M1698.4199999999998 1420.88L1689.18 1430.12" stroke="#4b3636" stroke-width="2.400" fill="none"/></svg>
<svg style="left:1681.8px;top:1455.5px" width="24" height="24" viewBox="1681.8 1455.5 24 24"><circle cx="1693.8" cy="1467.5" r="11" fill="#dd7168"/><path d="M1689.18 1462.88L1698.4199999999998 1472.12M1698.4199999999998 1462.88L1689.18 1472.12" stroke="#4b3636" stroke-width="2.400" fill="none"/></svg>
<svg style="left:1723px;top:1271.5px" width="14" height="16" viewBox="1723 1271.5 14 16"><path d="M1724 1272.5V1286.5L1736 1279.5Z" fill="#c7c7c7"/></svg>
<svg style="left:1723px;top:1417px" width="14" height="16" viewBox="1723 1417 14 16"><path d="M1724 1418V1432L1736 1425Z" fill="#c7c7c7"/></svg>
<svg style="left:1723px;top:1459px" width="14" height="16" viewBox="1723 1459 14 16"><path d="M1724 1460V1474L1736 1467Z" fill="#c7c7c7"/></svg>
<div class="t" style='left:1742.85px;top:1269.44px;font-size:22px;color:#f9dedc;font-family:"Liberation Mono";letter-spacing:0.040px;-webkit-text-stroke:0.300px currentColor;'>SyntaxError: Unexpected token '&lt;', "</div>
<div class="t" style='left:1713.65px;top:1295.89px;font-size:22px;color:#f9dedc;font-family:"Liberation Mono";letter-spacing:0.040px;-webkit-text-stroke:0.300px currentColor;'>&lt;br /&gt;</div>
<div class="t" style='left:1713.65px;top:1322.34px;font-size:22px;color:#f9dedc;font-family:"Liberation Mono";letter-spacing:0.040px;-webkit-text-stroke:0.300px currentColor;'>&lt;b&gt;"... is not valid JSON</div>
<div class="t" style='left:1766.61px;top:1348.79px;font-size:22px;color:#f9dedc;font-family:"Liberation Mono";letter-spacing:0.040px;-webkit-text-stroke:0.300px currentColor;'>at JSON.parse (&lt;anonymous&gt;)</div>
<div class="t" style='left:1766.61px;top:1375.24px;font-size:22px;color:#f9dedc;font-family:"Liberation Mono";letter-spacing:0.040px;-webkit-text-stroke:0.300px currentColor;'>at xhr.onreadystatechange (</div>
<div class="t" style='left:2124.09px;top:1375.24px;font-size:22px;color:#a8c7fa;font-family:"Liberation Mono";letter-spacing:0.040px;-webkit-text-stroke:0.300px currentColor;text-decoration:underline;text-underline-offset:2px;'>helpers.js:463:28</div>
<div class="t" style='left:2347.17px;top:1375.24px;font-size:22px;color:#f9dedc;font-family:"Liberation Mono";letter-spacing:0.040px;-webkit-text-stroke:0.300px currentColor;'>)</div>
<div class="t" style='left:1741.85px;top:1415.14px;font-size:22px;color:#f9dedc;font-family:"Liberation Mono";letter-spacing:0.040px;-webkit-text-stroke:0.300px currentColor;'>Backend service NULL</div>
<div class="t" style='left:1741.85px;top:1457.14px;font-size:22px;color:#f9dedc;font-family:"Liberation Mono";letter-spacing:0.040px;-webkit-text-stroke:0.300px currentColor;'>Uncaught (in promise) </div>
<div class="t" style='left:2033.13px;top:1457.14px;font-size:22px;color:#a58cf0;font-family:"Liberation Mono";letter-spacing:0.040px;-webkit-text-stroke:0.300px currentColor;'>false</div>
<div class="t" style='left:2628.99px;top:1269.44px;font-size:22px;color:#a8c7fa;font-family:"Liberation Mono";letter-spacing:0.040px;-webkit-text-stroke:0.300px currentColor;text-decoration:underline;text-underline-offset:2px;'>helpers.js:471</div>
<div class="t" style='left:2668.71px;top:1415.14px;font-size:22px;color:#a8c7fa;font-family:"Liberation Mono";letter-spacing:0.040px;-webkit-text-stroke:0.300px currentColor;text-decoration:underline;text-underline-offset:2px;'>Main.js:183</div>
<div class="t" style='left:2536.31px;top:1457.14px;font-size:22px;color:#a8c7fa;font-family:"Liberation Mono";letter-spacing:0.040px;-webkit-text-stroke:0.300px currentColor;text-decoration:underline;text-underline-offset:2px;'>DocumentPDFBox.js:102</div>
<svg style="left:1680px;top:1502px" width="16" height="20" viewBox="1680 1502 16 20"><path d="M1683 1504.500L1691.500 1511.800L1683 1519" fill="none" stroke="#7ca9f5" stroke-width="2.400"/></svg>
</body></html>
